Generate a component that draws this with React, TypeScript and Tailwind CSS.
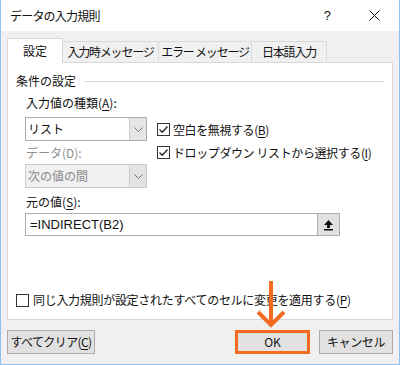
import React from "react";

const Check = ({ checked }: { checked: boolean }) => (
  <div className="w-[13px] h-[13px] border border-[#333333] bg-white flex items-center justify-center shrink-0">
    {checked && (
      <svg width="11" height="11" viewBox="0 0 11 11">
        <path d="M1.5 5.5 L4.2 8.2 L9.5 2.5" fill="none" stroke="#222" strokeWidth="1.3" />
      </svg>
    )}
  </div>
);

const Chevron = ({ color }: { color: string }) => (
  <svg width="9" height="5" viewBox="0 0 9 5">
    <path d="M0.5 0.5 L4.5 4.5 L8.5 0.5" fill="none" stroke={color} strokeWidth="1" />
  </svg>
);

const U = ({ children }: { children: React.ReactNode }) => (
  <span className="underline underline-offset-2 decoration-1">{children}</span>
);

const tabs = [
  { label: "設定", w: "w-[56px]", active: true },
  { label: "入力時メッセージ", w: "w-[97px]", active: false },
  { label: "エラー メッセージ", w: "w-[94px]", active: false },
  { label: "日本語入力", w: "w-[76px]", active: false },
];

export default function App() {
  return (
    <div className="relative w-[400px] h-[365px] flex flex-col border-x border-b border-[#8ebfee] text-[12px] leading-[16px] text-[#111] font-['Noto_Sans_CJK_JP',sans-serif] overflow-hidden">
      {/* title bar */}
      <div className="h-[31px] bg-white flex items-center pl-[9px] shrink-0">
        <span className="tracking-[-0.8px]">データの入力規則</span>
        <span className="ml-auto mr-[38px] text-[13px] font-['Liberation_Sans',sans-serif]">?</span>
        <svg width="11" height="11" viewBox="0 0 11 11" className="mr-[19px]">
          <path d="M0.5 0.5 L10.5 10.5 M10.5 0.5 L0.5 10.5" stroke="#111" strokeWidth="1" />
        </svg>
      </div>

      {/* body */}
      <div className="flex-1 bg-[#f0f0f0] pl-[6px] pr-[6px] pt-[7px] flex flex-col">
        <div className="flex items-end h-[24px]">
          {tabs.map((t) =>
            t.active ? (
              <div
                key={t.label}
                className={`${t.w} h-[25px] -mb-px relative z-10 bg-white border border-b-0 border-[#d9d9d9] flex items-center justify-center`}
              >
                {t.label}
              </div>
            ) : (
              <div
                key={t.label}
                className={`${t.w} h-[21px] -ml-px border border-b-0 border-[#d9d9d9] flex items-center justify-center whitespace-nowrap tracking-[-1.2px]`}
              >
                {t.label}
              </div>
            )
          )}
        </div>

        {/* panel */}
        <div className="h-[258px] bg-white border border-[#d9d9d9] flex flex-col">
          <div className="mt-[10px] pl-[8px] flex items-center">
            <span>条件の設定</span>
            <div className="flex-1 h-px bg-[#dcdcdc] ml-[8px] mr-[7px]" />
          </div>

          <div className="pl-[17px] flex flex-col">
            <div className="mt-[6px] pl-px">
              入力値の種類(<U>A</U>):
            </div>
            <div className="mt-[6px] flex">
              <div className="w-[122px] flex flex-col">
                <div className="h-[24px] border border-[#adadad] bg-white flex">
                  <div className="flex-1 flex items-center pl-[2px]">リスト</div>
                  <div className="w-[17px] bg-[#e5e5e5] border-l border-[#cfcfcf] flex items-center justify-center">
                    <Chevron color="#707070" />
                  </div>
                </div>
                <div className="mt-[4px] pl-px text-[#8d8d8d]">データ(D):</div>
                <div className="mt-[3px] h-[24px] border border-[#cccccc] bg-[#f0f0f0] flex">
                  <div className="flex-1 flex items-center pl-[2px] text-[#8d8d8d]">次の値の間</div>
                  <div className="w-[17px] bg-[#e3e3e3] border-l border-[#cccccc] flex items-center justify-center">
                    <Chevron color="#707070" />
                  </div>
                </div>
              </div>
              <div className="ml-[10px] flex flex-col">
                <div className="h-[23px] flex items-center gap-[3px] pt-[2px]">
                  <Check checked />
                  <span className="tracking-[-0.4px]">
                    空白を無視する(<U>B</U>)
                  </span>
                </div>
                <div className="h-[23px] flex items-center gap-[3px] pt-[2px] whitespace-nowrap">
                  <Check checked />
                  <span className="tracking-[-0.4px]">
                    ドロップダウン リストから選択する(<U>I</U>)
                  </span>
                </div>
              </div>
            </div>

            <div className="mt-[6px] pl-px">
              元の値(<U>S</U>):
            </div>
            <div className="mt-[3px] w-[315px] h-[23px] border border-[#adadad] bg-white flex">
              <div className="flex-1 flex items-center pl-[4px] font-['Liberation_Sans',sans-serif] text-[13px]">
                =INDIRECT(B2)
              </div>
              <div className="w-[22px] bg-[#e1e1e1] border-l border-[#adadad] flex items-center justify-center">
                <svg width="11" height="12" viewBox="0 0 11 12">
                  <path d="M5.5 1 L10 6 L7 6 L7 9 L4 9 L4 6 L1 6 Z" fill="#111" />
                  <rect x="1" y="10" width="9" height="1.5" fill="#111" />
                </svg>
              </div>
            </div>
          </div>

          <div className="mt-auto mb-[11px] pl-[8px] flex items-center gap-[4px] whitespace-nowrap">
            <Check checked={false} />
            <span className="tracking-[-0.3px]">
              同じ入力規則が設定されたすべてのセルに変更を適用する(<U>P</U>)
            </span>
          </div>
        </div>

        {/* buttons */}
        <div className="mt-[10px] flex items-center">
          <button className="w-[88px] h-[24px] bg-[#e1e1e1] border border-[#adadad] flex items-center justify-center whitespace-nowrap tracking-[-0.6px]">
            すべてクリア(<U>C</U>)
          </button>
          <button className="ml-auto w-[75px] h-[24px] bg-[#e1e1e1] border-[3px] border-[#f26b21] flex items-center justify-center">
            OK
          </button>
          <button className="ml-[9px] w-[74px] h-[24px] bg-[#e1e1e1] border border-[#adadad] flex items-center justify-center whitespace-nowrap tracking-[-0.4px]">
            キャンセル
          </button>
        </div>
      </div>

      {/* annotation arrow */}
      <svg className="absolute left-[254px] top-[280px]" width="32" height="50" viewBox="0 0 32 50">
        <path d="M16 1 L16 45" stroke="#f26b21" strokeWidth="4" />
        <path d="M3 32 L16 45 L29 32" fill="none" stroke="#f26b21" strokeWidth="4" />
      </svg>
    </div>
  );
}
